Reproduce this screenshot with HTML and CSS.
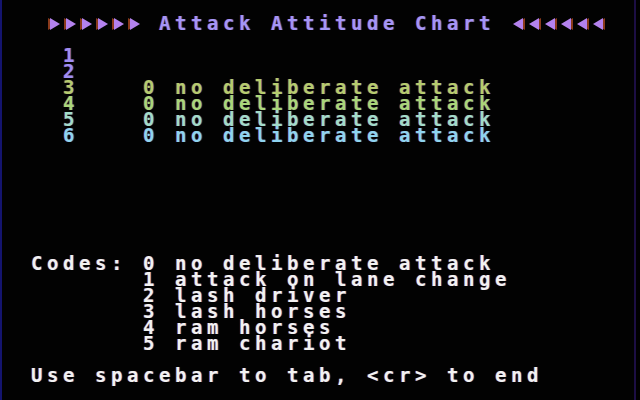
FILE: index.html
```html
<!DOCTYPE html>
<html>
  <head>
    <meta charset="utf-8" />
    <link rel="stylesheet" href="styles.css">
  </head>
  <body>
    <div class="screen">
      <div class="line title">  <span class="arrow right"></span><span class="arrow right"></span><span class="arrow right"></span><span class="arrow right"></span><span class="arrow right"></span><span class="arrow right"></span> Attack Attitude Chart <span class="arrow left"></span><span class="arrow left"></span><span class="arrow left"></span><span class="arrow left"></span><span class="arrow left"></span><span class="arrow left"></span></div>

      <div class="chart">
        <div class="line row-1">   1</div>
        <div class="line row-2">   2</div>
        <div class="line row-3">   3    0 no deliberate attack</div>
        <div class="line row-4">   4    0 no deliberate attack</div>
        <div class="line row-5">   5    0 no deliberate attack</div>
        <div class="line row-6">   6    0 no deliberate attack</div>
      </div>

      <div class="codes">
        <div class="line"> Codes: 0 no deliberate attack</div>
        <div class="line">        1 attack on lane change</div>
        <div class="line">        2 lash driver</div>
        <div class="line">        3 lash horses</div>
        <div class="line">        4 ram horses</div>
        <div class="line">        5 ram chariot</div>
      </div>

      <div class="line prompt"> Use spacebar to tab, &lt;cr&gt; to end</div>
    </div>
  </body>
</html>
```

FILE: styles.css
```css
html,
body {
  margin: 0;
  padding: 0;
  background: #000;
}

/* 40 column text screen, 16px cells */
.screen {
  width: 636px;
  height: 400px;
  overflow: hidden;
  box-sizing: border-box;
  padding: 15px 0 0 13px;
  border-left: 2px solid #14146e;
  border-right: 2px solid #1c0e44;
  background: #020202;
  font-family: 'DejaVu Sans Mono', monospace;
  font-weight: bold;
  font-size: 19px;
  letter-spacing: 4.56px;
  color: #f2f2f2;
  text-shadow: -1px 0 rgba(255, 70, 20, 0.35), 1px 0 rgba(40, 110, 255, 0.4);
}

.line {
  height: 16px;
  line-height: 16px;
  white-space: pre;
}

.title {
  color: #a496f6;
  margin-bottom: 16px;
}

.arrow {
  display: inline-block;
  width: 16px;
  height: 16px;
  vertical-align: top;
  position: relative;
}

.arrow::before {
  content: '';
  position: absolute;
  top: 3px;
  width: 0;
  height: 0;
  border-top: 6px solid transparent;
  border-bottom: 6px solid transparent;
}

.arrow.right::before {
  left: 3px;
  border-left: 10px solid #b482ee;
  filter: drop-shadow(-2px 0 0 #8a3a1c);
}

.arrow.left::before {
  left: 2px;
  border-right: 10px solid #b482ee;
  filter: drop-shadow(2px 0 0 #8a3a1c);
}

.chart {
  margin-bottom: 112px;
}

.row-1,
.row-2 {
  color: #9e8ef2;
}

.row-3 {
  color: #b6cc6e;
}

.row-4 {
  color: #aad67a;
}

.row-5 {
  color: #a2dcca;
}

.row-6 {
  color: #8ed4f0;
}

.codes {
  margin-bottom: 16px;
}
```
